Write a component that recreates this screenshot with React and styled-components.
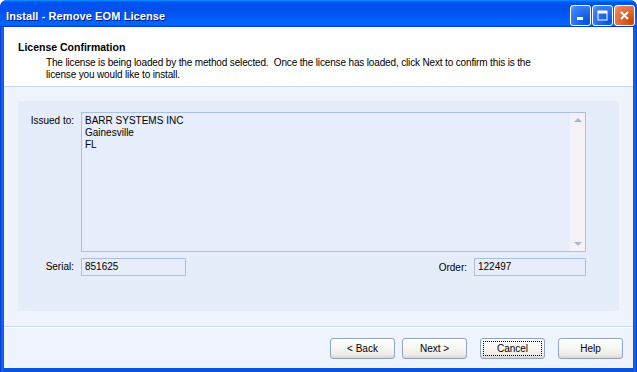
import React from "react";
import styled, { createGlobalStyle } from "styled-components";

const GlobalStyle = createGlobalStyle`
  html, body {
    margin: 0;
    padding: 0;
    background: #ffffff;
  }
  body {
    font-family: "Liberation Sans", Arial, sans-serif;
    font-size: 10px;
    color: #000000;
  }
`;

const Frame = styled.div`
  width: 637px;
  height: 372px;
  box-sizing: border-box;
  display: flex;
  flex-direction: column;
  background: linear-gradient(90deg, #0831d9 0, #166aee 2px, #0855dd 4px, #0855dd 633px, #166aee 635px, #0831d9 637px);
  border-radius: 7px 7px 0 0;
  overflow: hidden;
  padding: 0 4px 4px;
`;

const TitleBar = styled.div`
  height: 27px;
  margin: 0 -4px;
  padding: 0 2px 0 6px;
  display: flex;
  align-items: center;
  justify-content: space-between;
  background: linear-gradient(180deg, #0997ff 0, #0053ee 8%, #0050ee 40%, #0066ff 88%, #0066ff 93%, #005bff 95%, #003dd7 96%, #003dd7 100%);
`;

const TitleText = styled.span`
  color: #ffffff;
  font-weight: bold;
  font-size: 11px;
  letter-spacing: 0.1px;
  text-shadow: 1px 1px 0 #0a1883;
  padding-top: 4px;
`;

const Controls = styled.div`
  display: flex;
  gap: 1px;
  padding-top: 4px;
`;

const CtlButton = styled.div`
  width: 21px;
  height: 21px;
  box-sizing: border-box;
  border: 1px solid #ffffff;
  border-radius: 3px;
  display: flex;
  align-items: center;
  justify-content: center;
  background: ${p => p.$close
    ? "radial-gradient(circle at 85% 85%, #cc4600 0, #dc6527 40%, #e5805a 80%, #f0a58b 100%)"
    : "radial-gradient(circle at 85% 85%, #0054e3 0, #2267ea 40%, #3c82f6 80%, #7aa9ff 100%)"};
`;

const Content = styled.div`
  flex: 1;
  display: flex;
  flex-direction: column;
  background: #eef3fc;
`;

const Header = styled.div`
  height: 60px;
  background: #ffffff;
  border-bottom: 1px solid #c9d6ef;
  padding: 13px 0 0 14px;
  box-sizing: border-box;
`;

const HeaderTitle = styled.div`
  font-weight: bold;
  font-size: 10.5px;
  line-height: 14px;
`;

const HeaderText = styled.div`
  padding-left: 28px;
  line-height: 12px;
  margin-top: 3px;
  width: 500px;
  letter-spacing: -0.15px;
`;

const Body = styled.div`
  height: 240px;
  box-sizing: border-box;
  padding: 14px 14px 15px;
  border-bottom: 1px solid #c9d6ef;
`;

const Panel = styled.div`
  height: 100%;
  background: #e6edfa;
  box-sizing: border-box;
  padding: 11px 33px 0 0;
  display: grid;
  grid-template-columns: 56px 1fr;
  grid-template-rows: 140px 18px;
  column-gap: 7px;
  row-gap: 6px;
`;

const Label = styled.div`
  text-align: right;
  line-height: 14px;
  padding-top: ${p => p.$top || 2}px;
`;

const Row = styled.div`
  display: flex;
  align-items: stretch;
  justify-content: space-between;
`;

const Pair = styled.div`
  display: flex;
  align-items: center;
  gap: 7px;
`;

const TextBox = styled.div`
  box-sizing: border-box;
  border: 1px solid #a9c0e4;
  background: #e7edfa;
  height: ${p => p.$h || 18}px;
  width: ${p => (p.$w ? p.$w + "px" : "auto")};
  padding-left: 3px;
  line-height: 16px;
`;

const MemoBox = styled.div`
  box-sizing: border-box;
  border: 1px solid #a9c0e4;
  background: #e7edfa;
  display: flex;
`;

const MemoText = styled.div`
  flex: 1;
  padding: 2px 0 0 3px;
  line-height: 12px;
`;

const ScrollTrack = styled.div`
  width: 15px;
  background: #f4f2f6;
  display: flex;
  flex-direction: column;
  justify-content: space-between;
  align-items: center;
  padding: 5px 0;
`;

const Arrow = styled.div`
  width: 0;
  height: 0;
  border-left: 4px solid transparent;
  border-right: 4px solid transparent;
  ${p => p.$down ? "border-top: 4px solid #a8b4d4;" : "border-bottom: 4px solid #a8b4d4;"}
`;

const Footer = styled.div`
  flex: 1;
  display: flex;
  justify-content: flex-end;
  align-items: flex-start;
  padding: 10px 10px 0 0;
  border-top: 1px solid #ffffff;
`;

const Button = styled.div`
  width: 65px;
  height: 21px;
  flex: none;
  box-sizing: border-box;
  margin-left: ${p => p.$gap || 0}px;
  border: 1px solid #8ea4c6;
  border-radius: 3px;
  background: linear-gradient(180deg, #ffffff 0, #f6f6f3 50%, #eceae3 85%, #d8d6cc 100%);
  display: flex;
  align-items: stretch;
  padding: 2px;
`;

const Focus = styled.div`
  flex: 1;
  display: flex;
  align-items: center;
  justify-content: center;
  border: 1px dotted ${p => (p.$on ? "#000000" : "transparent")};
`;

export default function App() {
  return (
    <>
      <GlobalStyle />
      <Frame>
        <TitleBar>
          <TitleText>Install - Remove EOM License</TitleText>
          <Controls>
            <CtlButton>
              <svg width="13" height="13" viewBox="0 0 13 13">
                <rect x="3" y="8" width="6" height="3" fill="#ffffff" />
              </svg>
            </CtlButton>
            <CtlButton>
              <svg width="13" height="13" viewBox="0 0 13 13">
                <rect x="2" y="2" width="9" height="9" fill="none" stroke="#ffffff" strokeWidth="1" />
                <rect x="2" y="2" width="9" height="2.5" fill="#ffffff" />
              </svg>
            </CtlButton>
            <CtlButton $close>
              <svg width="13" height="13" viewBox="0 0 13 13">
                <path d="M3 3 L10 10 M10 3 L3 10" stroke="#ffffff" strokeWidth="2" />
              </svg>
            </CtlButton>
          </Controls>
        </TitleBar>
        <Content>
          <Header>
            <HeaderTitle>License Confirmation</HeaderTitle>
            <HeaderText>
              The license is being loaded by the method selected.&nbsp; Once the license has loaded, click Next to confirm this is the license you would like to install.
            </HeaderText>
          </Header>
          <Body>
            <Panel>
              <Label $top={0}>Issued to:</Label>
              <MemoBox>
                <MemoText>
                  BARR SYSTEMS INC
                  <br />
                  Gainesville
                  <br />
                  FL
                </MemoText>
                <ScrollTrack>
                  <Arrow />
                  <Arrow $down />
                </ScrollTrack>
              </MemoBox>
              <Label>Serial:</Label>
              <Row>
                <TextBox $w={105}>851625</TextBox>
                <Pair>
                  <span>Order:</span>
                  <TextBox $w={112}>122497</TextBox>
                </Pair>
              </Row>
            </Panel>
          </Body>
          <Footer>
            <Button>
              <Focus>&lt; Back</Focus>
            </Button>
            <Button $gap={7}>
              <Focus>Next &gt;</Focus>
            </Button>
            <Button $gap={13}>
              <Focus $on>Cancel</Focus>
            </Button>
            <Button $gap={13}>
              <Focus>Help</Focus>
            </Button>
          </Footer>
        </Content>
      </Frame>
    </>
  );
}
